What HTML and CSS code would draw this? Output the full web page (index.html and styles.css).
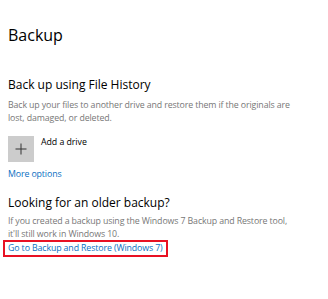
FILE: index.html
```html
<!DOCTYPE html>
<html lang="en">
<head>
    <meta charset="UTF-8">
    <meta name="viewport" content="width=device-width, initial-scale=1.0">
    <title>Backup</title>
    <link rel="stylesheet" href="styles.css">
</head>
<body>

    <div id="page">
        <h1 class="page-title">Backup</h1>

        <h2 class="section-title">Back up using File History</h2>
        <p class="section-text">Back up your files to another drive and restore them if the originals are lost, damaged, or deleted.</p>

        <div class="drive-row">
            <div class="drive-button">
                <svg width="26" height="26" viewBox="0 0 26 26">
                    <path d="M13 7.5v11M7.5 13h11" stroke="#333" stroke-width="1" fill="none"/>
                </svg>
            </div>
            <span class="drive-label">Add a drive</span>
        </div>

        <a class="link more-link">More options</a>

        <h2 class="section-title older">Looking for an older backup?</h2>
        <p class="section-text tight">If you created a backup using the Windows 7 Backup and Restore tool, it'll still work in Windows 10.</p>

        <a class="link restore-link">Go to Backup and Restore (Windows 7)</a>
    </div>

</body>
</html>
```

FILE: styles.css
```css
body {
    background: white;
    margin: 0;
    font-family: 'Open Sans', sans-serif;
    color: black;
}

#page {
    padding: 25px 8px 0 8px;
}

.page-title {
    margin: 0;
    font-size: 16px;
    line-height: 20px;
    font-weight: normal;
}

.section-title {
    margin: 32px 0 0 0;
    font-size: 12px;
    line-height: 16px;
    font-weight: normal;
}

.section-title.older {
    margin-top: 14px;
}

.section-text {
    margin: 6px 0 0 0;
    width: 292px;
    font-size: 8.8px;
    line-height: 13px;
    letter-spacing: -0.12px;
    color: #777777;
}

.section-text.tight {
    margin-top: 4px;
}

.drive-row {
    display: flex;
    gap: 7px;
    margin-top: 11px;
}

.drive-button {
    width: 26px;
    height: 26px;
    background-color: #cccccc;
}

.drive-label {
    font-size: 8.8px;
    line-height: 13px;
    letter-spacing: -0.05px;
}

.link {
    display: block;
    font-size: 8.8px;
    line-height: 13px;
    letter-spacing: -0.12px;
    color: #0a6fc2;
    text-decoration: none;
    cursor: pointer;
}

.more-link {
    margin-top: 6px;
}

.restore-link {
    width: fit-content;
    margin: -1px 0 0 -5px;
    padding: 0 3px;
    border: 2px solid #e81123;
}
```
